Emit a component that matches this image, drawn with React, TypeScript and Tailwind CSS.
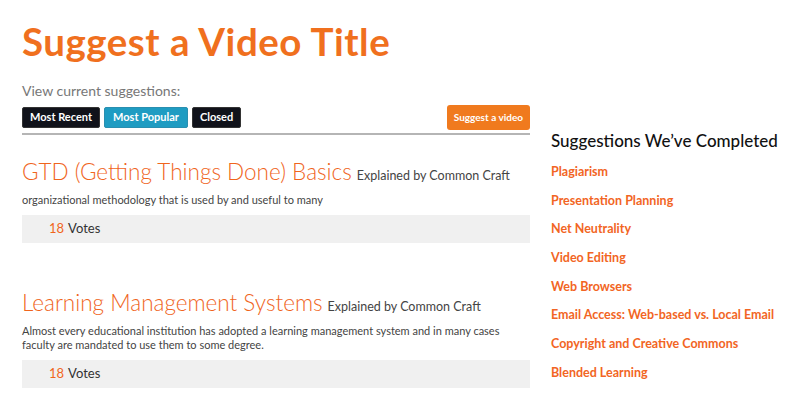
import React from "react";

const completed = [
  "Plagiarism",
  "Presentation Planning",
  "Net Neutrality",
  "Video Editing",
  "Web Browsers",
  "Email Access: Web-based vs. Local Email",
  "Copyright and Creative Commons",
  "Blended Learning",
];

function Suggestion({ title, desc }: { title: string; desc: React.ReactNode }) {
  return (
    <div>
      <div className="flex items-baseline gap-[5px]">
        <span className="text-[22.5px] leading-[28px] font-light text-[#f0651d]">{title}</span>
        <span className="text-[12.5px] text-[#444]">Explained by Common Craft</span>
      </div>
      <p className="mt-[7px] text-[11px] leading-[14px] text-[#444]">{desc}</p>
      <div className="mt-[8px] h-[28px] bg-[#f0f0f0] flex items-center pl-[27px] text-[13px]">
        <span className="text-[#f0651d]">18</span>
        <span className="ml-[4px] text-[#333]">Votes</span>
      </div>
    </div>
  );
}

export default function App() {
  return (
    <div className="w-[800px] h-[394px] overflow-hidden bg-white font-['Lato',sans-serif] flex pl-[22px]">
      <div className="w-[508px] flex flex-col">
        <h1 className="mt-[19px] text-[38.5px] leading-[44px] font-bold text-[#f0701e] tracking-[0.5px]">Suggest a Video Title</h1>
        <div className="mt-[19px] text-[14px] leading-[18px] text-[#777]">View current suggestions:</div>
        <div className="mt-[5px] flex items-center justify-between">
          <div className="flex gap-[4px]">
            <button className="h-[21px] px-[7px] bg-[#10121a] text-white text-[11px] font-bold rounded-[2px] border border-[#333]">Most Recent</button>
            <button className="h-[21px] px-[8px] bg-[#1f9cc2] text-white text-[11px] font-bold rounded-[2px] border border-[#2a8fb0]">Most Popular</button>
            <button className="h-[21px] px-[7px] bg-[#10121a] text-white text-[11px] font-bold rounded-[2px] border border-[#333]">Closed</button>
          </div>
          <button className="h-[25px] px-[7px] bg-[#f07a1e] text-white text-[10px] font-bold rounded-[3px]">Suggest a video</button>
        </div>
        <div className="mt-[3px] h-[2px] bg-[#b5b5b5]" />
        <div className="mt-[23px]">
          <Suggestion title="GTD (Getting Things Done) Basics" desc="organizational methodology that is used by and useful to many" />
        </div>
        <div className="mt-[46px]">
          <Suggestion
            title="Learning Management Systems"
            desc={
              <>
                Almost every educational institution has adopted a learning management system and in many cases
                <br />
                faculty are mandated to use them to some degree.
              </>
            }
          />
        </div>
      </div>
      <div className="ml-[21px] flex-1 pt-[130px]">
        <h2 className="text-[17px] leading-[22px] text-[#111] font-medium">Suggestions We’ve Completed</h2>
        <ul className="mt-[6px] flex flex-col">
          {completed.map((c) => (
            <li key={c} className="h-[28.7px] flex items-center text-[12.5px] font-bold text-[#f26524]">
              {c}
            </li>
          ))}
        </ul>
      </div>
    </div>
  );
}
